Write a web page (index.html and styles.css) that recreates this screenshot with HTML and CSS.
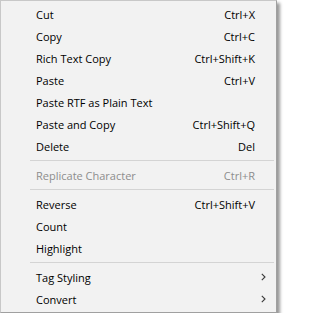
FILE: index.html
```html
<!DOCTYPE html>
<html>
<head>
<meta charset="utf-8">
<link rel="stylesheet" href="styles.css">
</head>
<body>
<div class="menu">
  <div class="item"><span class="label">Cut</span><span class="key">Ctrl+X</span></div>
  <div class="item"><span class="label">Copy</span><span class="key">Ctrl+C</span></div>
  <div class="item"><span class="label">Rich Text Copy</span><span class="key">Ctrl+Shift+K</span></div>
  <div class="item"><span class="label">Paste</span><span class="key">Ctrl+V</span></div>
  <div class="item"><span class="label">Paste RTF as Plain Text</span><span class="key"></span></div>
  <div class="item"><span class="label">Paste and Copy</span><span class="key">Ctrl+Shift+Q</span></div>
  <div class="item"><span class="label">Delete</span><span class="key">Del</span></div>
  <div class="sep"></div>
  <div class="item disabled"><span class="label">Replicate Character</span><span class="key">Ctrl+R</span></div>
  <div class="sep"></div>
  <div class="item"><span class="label">Reverse</span><span class="key">Ctrl+Shift+V</span></div>
  <div class="item"><span class="label">Count</span><span class="key"></span></div>
  <div class="item"><span class="label">Highlight</span><span class="key"></span></div>
  <div class="sep"></div>
  <div class="item"><span class="label">Tag Styling</span><span class="key"></span><svg class="arrow" width="5" height="8" viewBox="0 0 5 8"><path d="M0.8 0.8 L4 4 L0.8 7.2" fill="none" stroke="#3a3a3a" stroke-width="1.1"/></svg></div>
  <div class="item"><span class="label">Convert</span><span class="key"></span><svg class="arrow" width="5" height="8" viewBox="0 0 5 8"><path d="M0.8 0.8 L4 4 L0.8 7.2" fill="none" stroke="#3a3a3a" stroke-width="1.1"/></svg></div>
</div>
</body>
</html>
```
FILE: styles.css
```css
html, body {
  margin: 0;
  padding: 0;
  background: #ffffff;
}
.menu {
  width: 271px;
  padding: 2px;
  border: 1px solid #a0a0a0;
  border-left-color: #c8c8c8;
  border-top-color: #c8c8c8;
  background: #f2f2f2;
  box-shadow: 3px 3px 3px rgba(0, 0, 0, 0.4);
  font-family: "Open Sans", "Noto Sans", sans-serif;
  font-size: 11px;
  color: #000;
}
.item {
  display: grid;
  grid-template-columns: 1fr auto 19px;
  align-items: center;
  height: 22px;
  padding-left: 33px;
}
.label {
  white-space: nowrap;
}
.key {
  text-align: right;
  white-space: nowrap;
}
.arrow {
  margin-left: 6px;
  display: block;
}
.disabled {
  color: #8d8d8d;
}
.sep {
  height: 1px;
  margin: 3px 0 3px 27px;
  background: #d4d4d4;
}
```
